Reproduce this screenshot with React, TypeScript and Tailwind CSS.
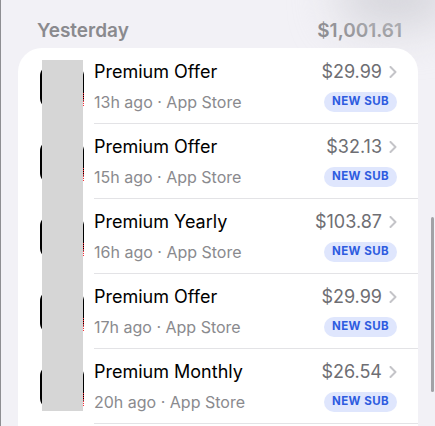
const ROWS = [
  { title: 'Premium Offer', when: '13h ago', price: '$29.99' },
  { title: 'Premium Offer', when: '15h ago', price: '$32.13' },
  { title: 'Premium Yearly', when: '16h ago', price: '$103.87' },
  { title: 'Premium Offer', when: '17h ago', price: '$29.99' },
  { title: 'Premium Monthly', when: '20h ago', price: '$26.54' },
];

function AppIcon() {
  return (
    <div className="relative h-[44px] w-[44px] shrink-0 rounded-[11px] bg-black">
      <span className="absolute bottom-[3px] right-0 h-[13px] border-r border-dotted border-red-500" />
    </div>
  );
}

function Chevron() {
  return (
    <svg width="8" height="12" viewBox="0 0 8 12" className="shrink-0">
      <path d="M1.5 1L6.5 6L1.5 11" fill="none" stroke="#c4c4c8" strokeWidth="2" strokeLinecap="round" strokeLinejoin="round" />
    </svg>
  );
}

export default function App() {
  return (
    <div
      className="relative h-[426px] w-[435px] overflow-hidden border-l border-[#8e8e92] bg-[#f2f1f6]"
      style={{ fontFamily: 'Inter, "Noto Sans", sans-serif' }}
    >
      {/* soft shadow top right */}
      <div className="absolute -right-4 -top-8 h-14 w-28 rounded-full bg-[#d2d2d8] blur-xl" />

      {/* ── section header ─────────────────────────────── */}
      <div className="flex items-center justify-between pl-[36px] pr-[33px] pt-[20px] pb-[6px] text-[19px] font-semibold leading-[22px] text-[#8a8a8e]">
        <span>Yesterday</span>
        <span>$1,001.61</span>
      </div>

      {/* ── card ───────────────────────────────────────── */}
      <div className="relative ml-[17px] w-[400px] rounded-[24px] bg-white pt-[1px] pb-[40px]">
        {ROWS.map((row) => (
          <div key={row.when} className="flex items-center pl-[22px]">
            <AppIcon />
            <div className="ml-[10px] flex h-[75px] flex-1 items-center justify-between border-b border-[#e3e3e6] pr-[21px]">
              <div className="flex flex-col">
                <span className="text-[18px] leading-[22px] text-black">{row.title}</span>
                <span className="mt-[9px] text-[16px] leading-[20px] text-[#8a8a8e]">
                  {row.when} · App Store
                </span>
              </div>
              <div className="flex flex-col items-end">
                <div className="flex items-center gap-[7px]">
                  <span className="text-[18px] leading-[22px] text-[#6e6e73]">{row.price}</span>
                  <Chevron />
                </div>
                <span className="mt-[9px] flex h-[20px] w-[73px] items-center justify-center rounded-full bg-[#dfe6fd] text-[11.5px] font-bold tracking-[0.04em] text-[#2e5ce0]">
                  NEW SUB
                </span>
              </div>
            </div>
          </div>
        ))}

        {/* redaction strip over the icons */}
        <div className="absolute left-[24px] top-[12px] h-[351px] w-[41px] bg-[#d6d6d6]" />
      </div>

      {/* scroll indicator */}
      <div className="absolute left-[430px] top-[217px] h-[175px] w-[3px] rounded-full bg-[#a2a2a6]" />
    </div>
  );
}
